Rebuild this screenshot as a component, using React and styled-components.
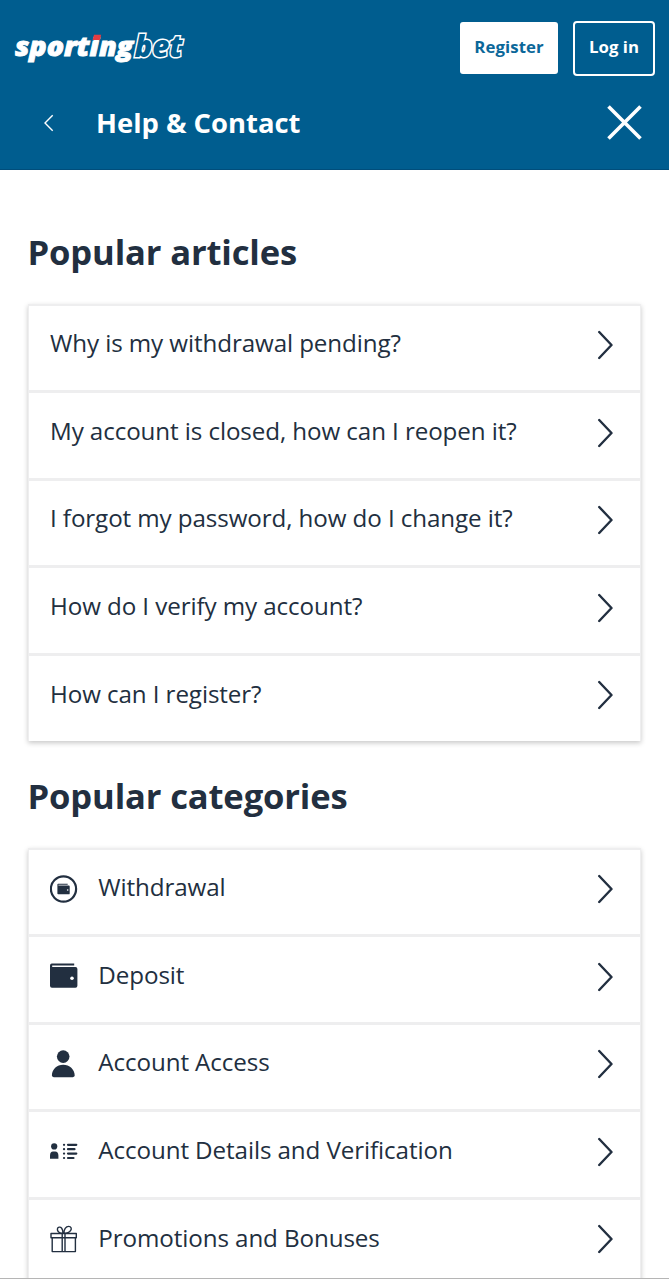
import React from 'react'
import styled, { createGlobalStyle, css } from 'styled-components'

const GlobalStyle = createGlobalStyle`
    * {
        box-sizing: border-box;
    }
    body {
        margin: 0;
        background: #fff;
        color: #222f40;
        font-family: 'Open Sans', 'Noto Sans', sans-serif;
    }
`
const Page = styled.div`
    height: 1280px;
    overflow: hidden;
    display: flex;
    flex-direction: column;
`
const Header = styled.header`
    height: 170px;
    flex: none;
    background: #005d8f;
    color: white;
    border-bottom: 1px solid #004d7b;
`
const TopBar = styled.div`
    display: flex;
    align-items: center;
    height: 96px;
    padding: 0 14px 0 12px;
`
const Logo = styled.svg`
    display: block;
    margin-right: auto;
`
const TopButton = styled.button`
    font-family: inherit;
    font-size: 16.8px;
    font-weight: 700;
    line-height: 24px;
    padding: 0 0 2px;
    border-radius: 3px;
    white-space: nowrap;
    ${props => props.$primary ? css`
        width: 98px;
        height: 52px;
        background: white;
        color: #0b6799;
        border: none;
        margin-right: 15px;
        letter-spacing: 0.1px;
    ` : css`
        width: 82px;
        height: 55px;
        background: transparent;
        color: white;
        border: 2px solid white;
        border-radius: 4px;
    `}
`
const TitleBar = styled.div`
    display: flex;
    align-items: center;
    height: 53px;
    padding: 0 27px 0 43px;
`
const Title = styled.h1`
    flex: 1;
    margin: 0 0 0 42px;
    font-size: 27.4px;
    line-height: 38px;
    font-weight: 700;
`
const Content = styled.main`
    flex: 1;
    min-height: 0;
    overflow: hidden;
    padding: 58px 28px 0;
    border-bottom: 1px solid #b5b5b5;
    margin-bottom: 1px;
`
const Heading = styled.h2`
    margin: 0 0 0 -0.5px;
    height: 48px;
    font-size: 34.6px;
    letter-spacing: -0.15px;
    line-height: 48px;
    font-weight: 700;
    white-space: nowrap;
`
const Card = styled.div`
    margin: 28px 0 31px;
    padding: 1.5px 1px 0;
    height: 437px;
    background: #eeeeef;
    box-shadow: 0 2px 5px rgba(0, 0, 0, 0.22);
`
const Row = styled.div`
    display: flex;
    align-items: center;
    height: 84.5px;
    margin-bottom: 3px;
    padding: 0 27px 0 21px;
    background: white;
    &:last-child {
        height: 85px;
        margin-bottom: 0;
    }
`
const Label = styled.span`
    flex: 1;
    font-size: 24.2px;
    letter-spacing: -0.1px;
    line-height: 34px;
    padding-bottom: 8.8px;
    white-space: nowrap;
`
const IconBox = styled.span`
    display: flex;
    width: 28px;
    height: 28px;
    margin: 0 20.3px 6px 0;
`
const Arrow = styled.svg`
    display: block;
    flex: none;
    margin-bottom: 5.5px;
`

const SportingLogo = () => (
    <Logo width="176" height="44" viewBox="0 -2 176 44">
        <g fontFamily="Open Sans" fontStyle="italic" fontWeight="800" fontSize="27">
            <text x="3" y="28" textLength="118" lengthAdjust="spacingAndGlyphs" fill="#fff" stroke="#fff" strokeWidth="0.9">sporting</text>
            <text x="122.5" y="28.5" textLength="48" lengthAdjust="spacingAndGlyphs" fontSize="30" fill="#005d8f" stroke="#fff" strokeWidth="3" paintOrder="stroke">bet</text>
        </g>
        <path d="M82 6.8h7.2l-1.4 5.2h-7.2z" fill="#e13c43" />
    </Logo>
)

const BackIcon = () => (
    <svg width="11" height="18" viewBox="0 0 11 18" fill="none" stroke="#fff" strokeWidth="1.4">
        <path d="M9.7 1.2 2 9l7.7 7.8" />
    </svg>
)

const CloseIcon = () => (
    <svg width="36" height="36" viewBox="0 0 36 36" fill="none" stroke="#fff" strokeWidth="3.6">
        <path d="M2.5 1.5l32 32M34.5 1.5l-32 32" />
    </svg>
)

const Chevron = () => (
    <Arrow width="16" height="30" viewBox="0 0 16 30" fill="none" stroke="#222f40" strokeWidth="2.4" strokeLinecap="round" strokeLinejoin="round">
        <path d="M2.2 2l12.3 13L2.2 28" />
    </Arrow>
)

const WithdrawalIcon = () => (
    <svg width="28" height="28" viewBox="0 0 28 28">
        <circle cx="13.5" cy="14" r="12.6" fill="none" stroke="#222f40" strokeWidth="2.2" />
        <path d="M8.1 8.8h9.6v1H8.4v.7h10.4a.9.9 0 0 1 .9.9v7a.9.9 0 0 1-.9.9H8.2a.8.8 0 0 1-.8-.8V9.5a.7.7 0 0 1 .7-.7z" fill="#222f40" />
        <circle cx="17.7" cy="15" r=".8" fill="#fff" />
    </svg>
)

const DepositIcon = () => (
    <svg width="28" height="28" viewBox="0 0 28 28">
        <path d="M1.8 1.5h22.4v2H2.2v1.6h23.2a2 2 0 0 1 2 2v16.6a2 2 0 0 1-2 2H2a2 2 0 0 1-2-2V3.4a2 2 0 0 1 1.8-1.9z" fill="#222f40" />
        <circle cx="22" cy="16.2" r="1.8" fill="#fff" />
    </svg>
)

const AccessIcon = () => (
    <svg width="28" height="28" viewBox="0 0 28 28" fill="#222f40">
        <circle cx="13.2" cy="6.6" r="6.3" />
        <path d="M1.9 25.4c0-6 5-10.7 11.3-10.7s11.5 4.7 11.5 10.7c0 1-1.2 1.9-3.3 1.9H5.2c-2.1 0-3.3-.9-3.3-1.9z" />
    </svg>
)

const DetailsIcon = () => (
    <svg width="28" height="28" viewBox="0 0 28 28" fill="#222f40">
        <circle cx="4.2" cy="9.4" r="3.1" />
        <path d="M0 21.8v-3.4c0-2.5 1.2-4 3-4h2.2c1.9 0 3.2 1.5 3.2 4v3.4z" />
        <g fill="none" stroke="#222f40" strokeWidth="2.2" strokeLinecap="round">
            <path d="M18 7.8h8.3M18 12.2h6.5M18 16.6h8.3M18 21h5.5" />
            <path d="M14 7.8h.1M14 12.2h.1M14 16.6h.1M14 21h.1" />
        </g>
    </svg>
)

const GiftIcon = () => (
    <svg width="28" height="28" viewBox="0 0 28 28" fill="none" stroke="#222f40" strokeWidth="1.4" strokeLinejoin="round">
        <path d="M1 8.5h25.3v4.3H1zM2.2 12.8h23.2v13.8H2.2zM12.2 8.5v18.1M15 8.5v18.1" />
        <path d="M13 8.4C9 8.4 7.2 6 7.4 4c.2-2 2.9-2.6 4.3-.8 1 1.3 1.3 3.2 1.3 5.2zM14 8.4c-.2-3.8 1.8-7 4.7-7 2.4 0 3.2 2.2 2 4-1.3 1.9-3.7 3-6.7 3z" />
    </svg>
)

const articles = [
    'Why is my withdrawal pending?',
    'My account is closed, how can I reopen it?',
    'I forgot my password, how do I change it?',
    'How do I verify my account?',
    'How can I register?',
]

const categories = [
    { name: 'Withdrawal', Icon: WithdrawalIcon },
    { name: 'Deposit', Icon: DepositIcon },
    { name: 'Account Access', Icon: AccessIcon },
    { name: 'Account Details and Verification', Icon: DetailsIcon },
    { name: 'Promotions and Bonuses', Icon: GiftIcon },
]

const App = () => (
    <Page>
        <GlobalStyle />
        <Header>
            <TopBar>
                <SportingLogo />
                <TopButton $primary>Register</TopButton>
                <TopButton>Log in</TopButton>
            </TopBar>
            <TitleBar>
                <BackIcon />
                <Title>Help &amp; Contact</Title>
                <CloseIcon />
            </TitleBar>
        </Header>
        <Content>
            <Heading>Popular articles</Heading>
            <Card>
                {articles.map(name => (
                    <Row key={name}>
                        <Label>{name}</Label>
                        <Chevron />
                    </Row>
                ))}
            </Card>
            <Heading>Popular categories</Heading>
            <Card>
                {categories.map(({ name, Icon }) => (
                    <Row key={name}>
                        <IconBox><Icon /></IconBox>
                        <Label>{name}</Label>
                        <Chevron />
                    </Row>
                ))}
            </Card>
        </Content>
    </Page>
)

export default App
